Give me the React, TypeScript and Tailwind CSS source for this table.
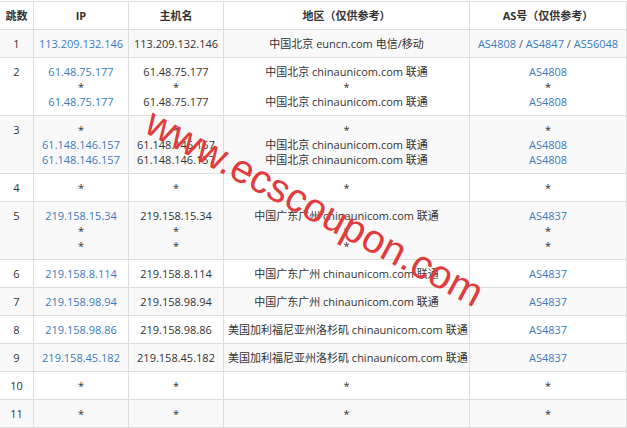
import React from "react";

type Cell = string[];
type Row = { n: string; ip: Cell; host: Cell; region: Cell; as: Cell };

const R1 = "中国北京 chinaunicom.com 联通";
const GZ = "中国广东广州 chinaunicom.com 联通";
const LA = "美国加利福尼亚州洛杉矶 chinaunicom.com 联通";

const rows: Row[] = [
  { n: "1", ip: ["113.209.132.146"], host: ["113.209.132.146"], region: ["中国北京 euncn.com 电信/移动"], as: ["AS4808 / AS4847 / AS56048"] },
  { n: "2", ip: ["61.48.75.177", "*", "61.48.75.177"], host: ["61.48.75.177", "*", "61.48.75.177"], region: [R1, "*", R1], as: ["AS4808", "*", "AS4808"] },
  { n: "3", ip: ["*", "61.148.146.157", "61.148.146.157"], host: ["*", "61.148.146.157", "61.148.146.157"], region: ["*", R1, R1], as: ["*", "AS4808", "AS4808"] },
  { n: "4", ip: ["*"], host: ["*"], region: ["*"], as: ["*"] },
  { n: "5", ip: ["219.158.15.34", "*", "*"], host: ["219.158.15.34", "*", "*"], region: [GZ, "*", "*"], as: ["AS4837", "*", "*"] },
  { n: "6", ip: ["219.158.8.114"], host: ["219.158.8.114"], region: [GZ], as: ["AS4837"] },
  { n: "7", ip: ["219.158.98.94"], host: ["219.158.98.94"], region: [GZ], as: ["AS4837"] },
  { n: "8", ip: ["219.158.98.86"], host: ["219.158.98.86"], region: [LA], as: ["AS4837"] },
  { n: "9", ip: ["219.158.45.182"], host: ["219.158.45.182"], region: [LA], as: ["AS4837"] },
  { n: "10", ip: ["*"], host: ["*"], region: ["*"], as: ["*"] },
  { n: "11", ip: ["*"], host: ["*"], region: ["*"], as: ["*"] },
];

function Blue({ t }: { t: string }) {
  if (t === "*") return <span className="text-[#333]">*</span>;
  if (t.includes(" / ")) {
    const parts = t.split(" / ");
    return (
      <span>
        {parts.map((p, i) => (
          <React.Fragment key={i}>
            {i > 0 && <span className="text-[#555]"> / </span>}
            <span className="text-[#3a7bbf]">{p}</span>
          </React.Fragment>
        ))}
      </span>
    );
  }
  return <span className="text-[#3a7bbf]">{t}</span>;
}

const cellBase = "border-r border-b border-[#dddddd] px-1 py-[6px] text-center leading-[15px]";

export default function App() {
  return (
    <div
      className="relative w-[627px] h-[428px] overflow-hidden bg-white pt-px text-[11px] text-[#333]"
      style={{ fontFamily: '"Open Sans", "Noto Sans CJK SC", sans-serif' }}
    >
      <div className="border-t border-[#dddddd]">
        <div className="grid grid-cols-[34px_95px_95px_246px_157px] font-bold text-[#333]">
          <div className={cellBase}>跳数</div>
          <div className={cellBase}>IP</div>
          <div className={cellBase}>主机名</div>
          <div className={cellBase}>地区（仅供参考）</div>
          <div className={cellBase}>AS号（仅供参考）</div>
        </div>
        {rows.map((r, i) => {
          const bg = i % 2 === 0 ? "bg-[#f9f9f9]" : "bg-white";
          return (
            <div key={r.n} className={`grid grid-cols-[34px_95px_95px_246px_157px] ${bg}`}>
              <div className={cellBase}>{r.n}</div>
              <div className={cellBase}>
                {r.ip.map((t, k) => (
                  <div key={k}><Blue t={t} /></div>
                ))}
              </div>
              <div className={cellBase}>
                {r.host.map((t, k) => (
                  <div key={k}>{t}</div>
                ))}
              </div>
              <div className={`${cellBase} whitespace-nowrap`}>
                {r.region.map((t, k) => (
                  <div key={k}>{t}</div>
                ))}
              </div>
              <div className={`${cellBase} whitespace-nowrap`}>
                {r.as.map((t, k) => (
                  <div key={k}><Blue t={t} /></div>
                ))}
              </div>
            </div>
          );
        })}
      </div>
      <div
        className="pointer-events-none absolute left-[315px] top-[207px] -translate-x-1/2 -translate-y-1/2 rotate-[28deg] whitespace-nowrap text-[40px] leading-none text-[#e23b3b]"
        style={{ fontFamily: '"Liberation Sans", Arial, sans-serif' }}
      >
        www.ecscoupon.com
      </div>
    </div>
  );
}
